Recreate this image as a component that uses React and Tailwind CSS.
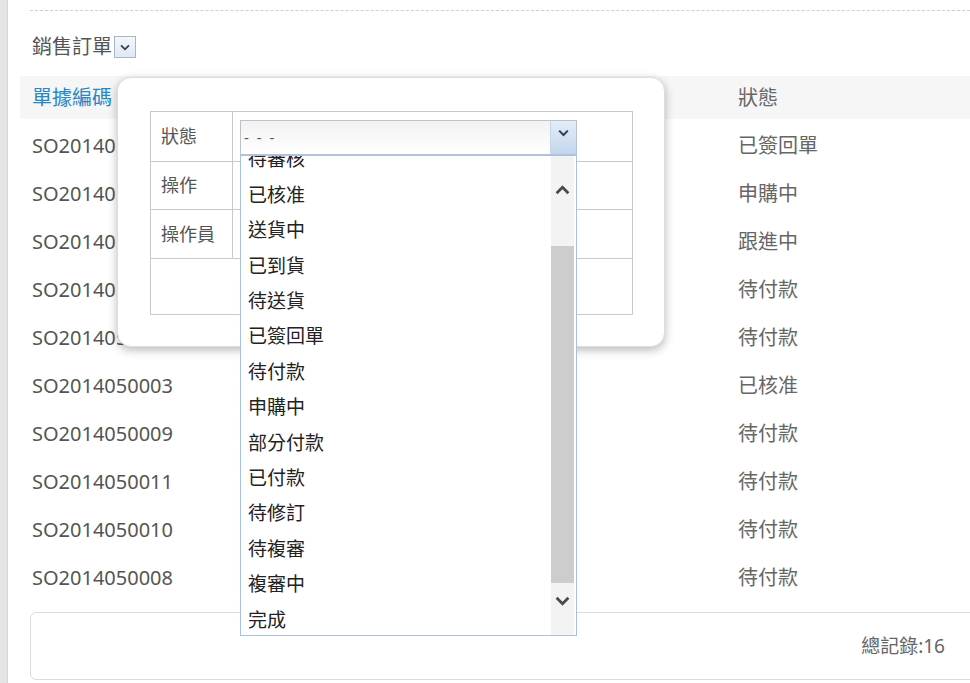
import React from "react";

const rows = [
  { id: "SO2014050001", status: "已簽回單" },
  { id: "SO2014050002", status: "申購中" },
  { id: "SO2014050004", status: "跟進中" },
  { id: "SO2014050005", status: "待付款" },
  { id: "SO2014050006", status: "待付款" },
  { id: "SO2014050003", status: "已核准" },
  { id: "SO2014050009", status: "待付款" },
  { id: "SO2014050011", status: "待付款" },
  { id: "SO2014050010", status: "待付款" },
  { id: "SO2014050008", status: "待付款" },
];

const options = [
  "待審核",
  "已核准",
  "送貨中",
  "已到貨",
  "待送貨",
  "已簽回單",
  "待付款",
  "申購中",
  "部分付款",
  "已付款",
  "待修訂",
  "待複審",
  "複審中",
  "完成",
];

const Chevron = ({ up = false, className = "" }) => (
  <svg viewBox="0 0 14 9" className={className}>
    <path
      d={up ? "M1.5 7.5 L7 2 L12.5 7.5" : "M1.5 1.5 L7 7 L12.5 1.5"}
      fill="none"
      stroke="currentColor"
      strokeWidth="2.6"
      strokeLinejoin="miter"
    />
  </svg>
);

const StatusSelect = () => {
  return (
    <div className="relative ml-[7px] mt-[8px] w-[337px] h-[35px]">
      <div className="flex h-full border border-[#b9c3d0] bg-gradient-to-b from-[#f2f2f2] to-white">
        <div className="flex-1 pl-[3px] pt-[9px] text-[15px] text-[#555] leading-none tracking-[2px]">
          - - -
        </div>
        <div className="w-[26px] h-full flex items-start justify-center pt-[8px] bg-gradient-to-b from-[#e4edf8] to-[#c3d6ee] border-l border-[#c7d5e8]">
          <Chevron className="w-[11px] h-[8px] text-[#2d3f5c]" />
        </div>
      </div>
      {/* open dropdown list */}
      <div className="absolute left-0 top-full w-[337px] h-[481px] z-20 bg-white border border-[#a9c1e0] overflow-hidden">
        <div className="-mt-[14px] pl-[7px]">
          {options.map((opt) => (
            <div
              key={opt}
              className="h-[35.4px] flex items-center text-[19px] text-[#222]"
            >
              {opt}
            </div>
          ))}
        </div>
        <div className="absolute right-[2px] top-0 bottom-0 w-[23px] bg-[#f3f3f3]">
          <Chevron up className="absolute left-[4px] top-[29px] w-[15px] h-[10px] text-[#4a4a4a]" />
          <div className="absolute left-0 right-0 top-[90px] h-[337px] bg-[#cdcdcd]" />
          <Chevron className="absolute left-[4px] top-[440px] w-[15px] h-[10px] text-[#4a4a4a]" />
        </div>
      </div>
    </div>
  );
};

const App = () => {
  return (
    <div className="relative w-[970px] h-[683px] overflow-hidden bg-white flex font-['Noto_Sans','Noto_Sans_CJK_TC',sans-serif]">
      <div className="w-[8px] h-full bg-[#e4e4e4] border-r border-[#d6d6d6]" />

      <main className="flex-1 flex flex-col">
        <div className="h-[11px] ml-[22px] border-b border-dashed border-[#cfcfcf]" />

        <div className="mt-[24px] ml-[24px] h-[24px] flex items-center">
          <span className="text-[20px] text-[#555] leading-none">銷售訂單</span>
          <div className="ml-[2px] w-[22px] h-[22px] border border-[#a7b6cc] bg-gradient-to-b from-[#f4f7fb] to-[#dfe8f4] flex items-center justify-center">
            <Chevron className="w-[10px] h-[7px] text-[#2d3f5c]" />
          </div>
        </div>

        <div className="mt-[17px] ml-[12px] h-[43px] bg-[#f6f6f6] flex items-center text-[20px]">
          <div className="w-[718px] pl-[12px] text-[#2a87c2]">單據編碼</div>
          <div className="text-[#666]">狀態</div>
        </div>

        <div className="mt-[3px] flex flex-col">
          {rows.map((r) => (
            <div key={r.id} className="ml-[12px] h-[48px] flex items-center text-[#555]">
              <div className="w-[718px] pl-[12px] text-[20px]">{r.id}</div>
              <div className="text-[20px] text-[#666]">{r.status}</div>
            </div>
          ))}
        </div>

        <div className="mt-[10px] ml-[22px] -mr-[12px] h-[68px] border border-[#dcdcdc] rounded-[6px] flex items-center justify-end pr-[36px]">
          <span className="text-[19px] text-[#666]">總記錄:16</span>
        </div>
      </main>

      {/* filter dialog */}
      <div className="absolute left-[117px] top-[77px] w-[548px] h-[270px] z-10 bg-white border border-[#dedede] rounded-[14px] shadow-[0_3px_10px_rgba(0,0,0,0.28)] pl-[32px] pt-[33px]">
        <div className="w-[483px] border border-[#c9c9c9] text-[18px] text-[#555]">
          <div className="flex h-[50px] border-b border-[#c9c9c9]">
            <div className="w-[82px] border-r border-[#c9c9c9] pl-[10px] pt-[11px]">狀態</div>
            <StatusSelect />
          </div>
          <div className="flex h-[48px] border-b border-[#c9c9c9]">
            <div className="w-[82px] border-r border-[#c9c9c9] pl-[10px] flex items-center">操作</div>
          </div>
          <div className="flex h-[49px] border-b border-[#c9c9c9]">
            <div className="w-[82px] border-r border-[#c9c9c9] pl-[10px] flex items-center">操作員</div>
          </div>
          <div className="h-[55px]" />
        </div>
      </div>
    </div>
  );
};

export default App;
